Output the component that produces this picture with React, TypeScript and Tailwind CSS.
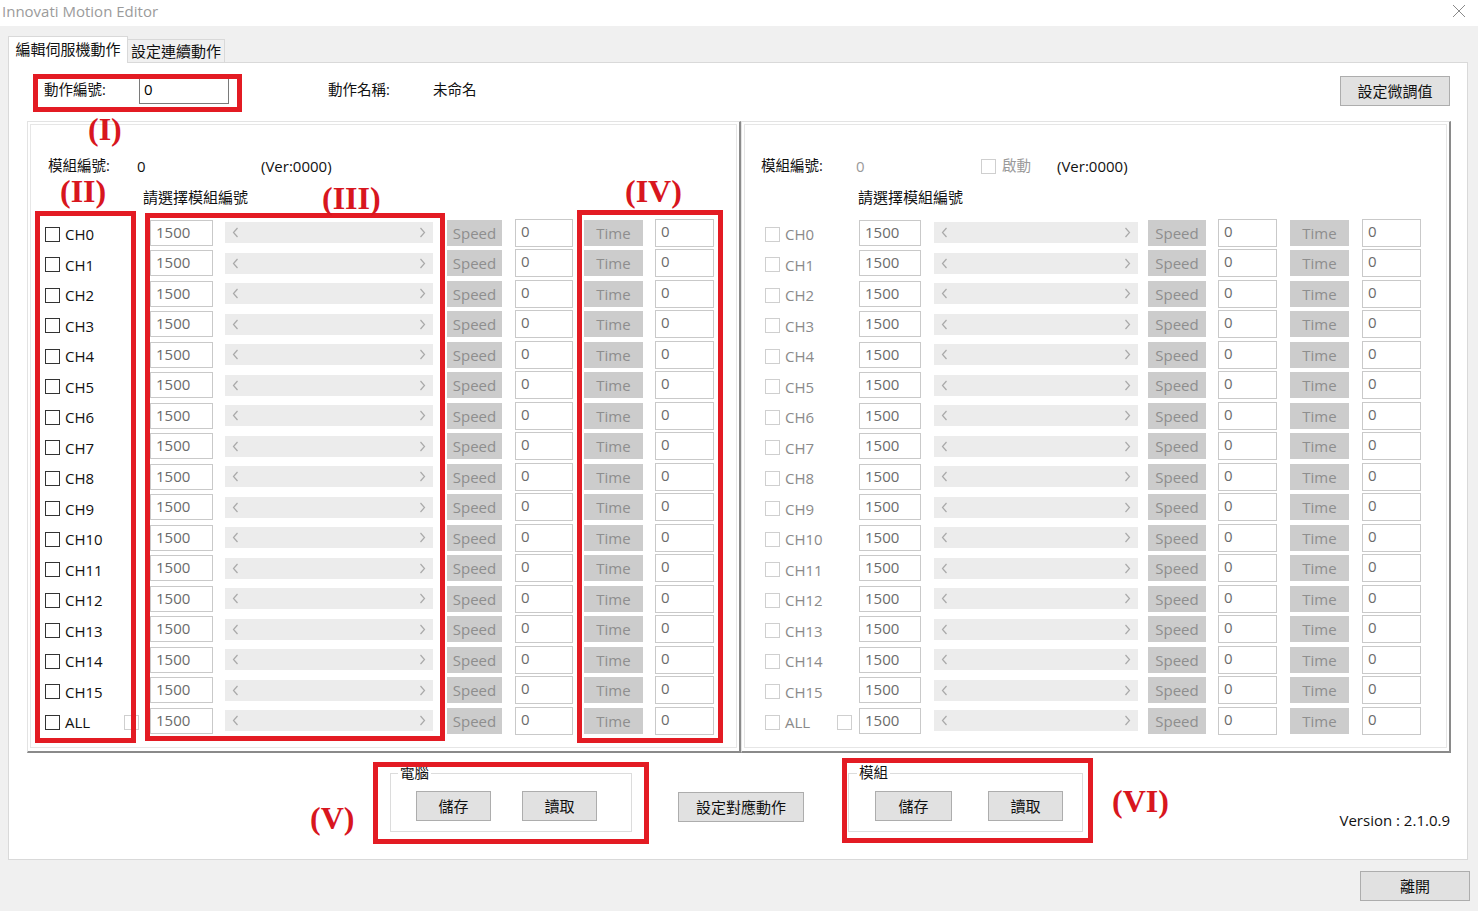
import React from "react";

const FONT = '"Open Sans", "Noto Sans CJK TC", sans-serif';

function Chevron({ dir }: { dir: "l" | "r" }) {
  return (
    <svg width="7" height="11" viewBox="0 0 7 11" className="block">
      {dir === "l" ? (
        <path d="M5.5 1 L1.5 5.5 L5.5 10" fill="none" stroke="#a9a9a9" strokeWidth="1.2" />
      ) : (
        <path d="M1.5 1 L5.5 5.5 L1.5 10" fill="none" stroke="#a9a9a9" strokeWidth="1.2" />
      )}
    </svg>
  );
}

function Check({ active }: { active: boolean }) {
  return (
    <div
      className={
        active
          ? "w-[15px] h-[15px] border border-[#333333] bg-white shrink-0"
          : "w-[15px] h-[15px] border border-[#cfcfcf] bg-white shrink-0"
      }
    />
  );
}

type RowCls = {
  active: boolean;
  lead: string;
  label: string;
  inW: string;
  g1: string;
  g2: string;
  g3: string;
  g4: string;
  g5: string;
};

const LEFT: RowCls = {
  active: true,
  lead: "w-[105px] flex items-center shrink-0",
  label: "ml-[5px] w-[59px] text-[15px] text-[#111111]",
  inW: "w-[63px]",
  g1: "ml-[12px] w-[208px]",
  g2: "ml-[14px] w-[55px]",
  g3: "ml-[13px] w-[58px]",
  g4: "ml-[11px] w-[59px]",
  g5: "ml-[12px] w-[59px]",
};

const RIGHT: RowCls = {
  active: false,
  lead: "w-[94px] flex items-center shrink-0",
  label: "ml-[5px] w-[52px] text-[15px] text-[#8a8a8a]",
  inW: "w-[62px]",
  g1: "ml-[13px] w-[204px]",
  g2: "ml-[10px] w-[58px]",
  g3: "ml-[12px] w-[59px]",
  g4: "ml-[13px] w-[59px]",
  g5: "ml-[13px] w-[59px]",
};

function Row({ name, c }: { name: string; c: RowCls }) {
  return (
    <div className="h-[30.5px] flex items-center">
      <div className={c.lead}>
        <Check active={c.active} />
        <span className={c.label}>{name}</span>
        {name === "ALL" && <Check active={false} />}
      </div>
      <div
        className={
          c.inW +
          " mb-[3px] h-[26px] shrink-0 border border-[#c9c9c9] bg-white pl-[5px] text-[15px] leading-[22px] text-[#6b6b6b]"
        }
      >
        1500
      </div>
      <div
        className={
          c.g1 +
          " mb-[3px] h-[21px] shrink-0 bg-[#ececec] flex items-center justify-between px-[7px]"
        }
      >
        <Chevron dir="l" />
        <Chevron dir="r" />
      </div>
      <div
        className={
          c.g2 +
          " mb-[3px] h-[26px] shrink-0 bg-[#cccccc] flex items-center justify-center text-[15px] text-[#8e8e8e]"
        }
      >
        Speed
      </div>
      <div
        className={
          c.g3 +
          " mb-[3px] h-[28px] shrink-0 border border-[#c9c9c9] bg-white pl-[5px] text-[15px] leading-[22px] text-[#6b6b6b]"
        }
      >
        0
      </div>
      <div
        className={
          c.g4 +
          " mb-[3px] h-[26px] shrink-0 bg-[#cccccc] flex items-center justify-center text-[15px] text-[#8e8e8e]"
        }
      >
        Time
      </div>
      <div
        className={
          c.g5 +
          " mb-[3px] h-[28px] shrink-0 border border-[#c9c9c9] bg-white pl-[5px] text-[15px] leading-[22px] text-[#6b6b6b]"
        }
      >
        0
      </div>
    </div>
  );
}

const NAMES = [
  "CH0", "CH1", "CH2", "CH3", "CH4", "CH5", "CH6", "CH7", "CH8", "CH9",
  "CH10", "CH11", "CH12", "CH13", "CH14", "CH15", "ALL",
];

function Btn({ className, children }: { className: string; children: React.ReactNode }) {
  return (
    <div
      className={
        className +
        " h-[30px] shrink-0 bg-[#e1e1e1] border border-[#adadad] flex items-center justify-center text-[15px] text-[#111111]"
      }
    >
      {children}
    </div>
  );
}

function Red({ className }: { className: string }) {
  return <div className={"absolute border-[5px] border-[#e31b23] " + className} />;
}

function RedLabel({ className, children }: { className: string; children: React.ReactNode }) {
  return (
    <div
      className={
        "absolute text-[32px] leading-[32px] font-bold text-[#d8161e] " + className
      }
      style={{ fontFamily: '"Liberation Serif", serif' }}
    >
      {children}
    </div>
  );
}

export default function App() {
  return (
    <div
      className="relative w-[1478px] h-[911px] bg-[#f0f0f0] flex flex-col overflow-hidden"
      style={{ fontFamily: FONT }}
    >
      {/* title bar */}
      <div className="h-[26px] bg-white flex items-center justify-between shrink-0">
        <span className="pl-[2px] text-[15px] leading-[20px] text-[#9b9b9b] -mt-[5px]">Innovati Motion Editor</span>
        <svg width="14" height="14" viewBox="0 0 14 14" className="mr-[12px] -mt-[4px]">
          <path d="M1 1 L13 13 M13 1 L1 13" stroke="#8a8a8a" strokeWidth="1" />
        </svg>
      </div>

      {/* tabs */}
      <div className="pt-[10px] pl-[8px] flex items-end shrink-0">
        <div className="w-[120px] h-[27px] bg-white border border-[#d9d9d9] border-b-0 -mb-px relative z-10 flex items-center justify-center text-[15px] text-[#111111] pb-[2px]">
          編輯伺服機動作
        </div>
        <div className="w-[97px] h-[23px] bg-[#f0f0f0] border border-[#d9d9d9] border-l-0 border-b-0 flex items-center justify-center text-[15px] text-[#111111]">
          設定連續動作
        </div>
      </div>

      {/* tab panel */}
      <div className="ml-[8px] w-[1460px] h-[798px] bg-white border border-[#d9d9d9] shrink-0 flex flex-col">
        {/* top row */}
        <div className="mt-[13px] h-[30px] flex items-center">
          <span className="ml-[35px] w-[95px] text-[14.5px] text-[#111111] -mt-[2px]">動作編號:</span>
          <div className="w-[90px] h-[26px] border border-[#7a7a7a] pl-[4px] text-[15px] leading-[20px] text-black">
            0
          </div>
          <span className="ml-[99px] w-[105px] text-[14.5px] text-[#111111] -mt-[2px]">動作名稱:</span>
          <span className="text-[14.5px] text-[#111111] -mt-[2px]">未命名</span>
          <div className="flex-1" />
          <Btn className="w-[110px] mr-[17px]">設定微調值</Btn>
        </div>

        {/* group boxes */}
        <div className="mt-[15px] ml-[18px] flex">
          {/* left */}
          <div className="w-[714px] h-[632px] border-t border-l border-[#e3e3e3] border-r-2 border-b-2 border-r-[#8a8a8a] border-b-[#8a8a8a]">
            <div className="m-[2px] h-[624px] border border-[#e6e6e6] flex flex-col">
              <div className="mt-[31px] h-[20px] flex items-center pl-[17px] text-[14.5px] text-[#111111]">
                <span className="w-[89px]">模組編號:</span>
                <span className="w-[124px] text-[15px]">0</span>
                <span className="text-[15px]">(Ver:0000)</span>
              </div>
              <div className="mt-[11px] h-[20px] flex items-center pl-[112px] text-[15px] text-[#111111]">
                請選擇模組編號
              </div>
              <div className="mt-[12px] pl-[14px] flex flex-col">
                {NAMES.map((n) => (
                  <Row key={n} name={n} c={LEFT} />
                ))}
              </div>
            </div>
          </div>
          {/* right */}
          <div className="w-[710px] h-[632px] border-t border-l border-[#e3e3e3] border-r-2 border-b-2 border-r-[#8a8a8a] border-b-[#8a8a8a]">
            <div className="m-[2px] h-[624px] border border-[#e6e6e6] flex flex-col">
              <div className="mt-[31px] h-[20px] flex items-center pl-[16px] text-[14.5px] text-[#111111]">
                <span className="w-[95px]">模組編號:</span>
                <span className="w-[125px] text-[15px] text-[#9a9a9a]">0</span>
                <Check active={false} />
                <span className="ml-[6px] w-[55px] text-[#9a9a9a]">啟動</span>
                <span className="text-[15px]">(Ver:0000)</span>
              </div>
              <div className="mt-[11px] h-[20px] flex items-center pl-[113px] text-[15px] text-[#111111]">
                請選擇模組編號
              </div>
              <div className="mt-[12px] pl-[20px] flex flex-col">
                {NAMES.map((n) => (
                  <Row key={n} name={n} c={RIGHT} />
                ))}
              </div>
            </div>
          </div>
        </div>

        {/* bottom */}
        <div className="flex items-start flex-1">
          <fieldset className="ml-[381px] mt-[12px] w-[242px] h-[67px] border border-[#dcdcdc] pl-[25px] pr-0 pt-0">
            <legend className="-ml-[18px] px-[2px] text-[14.5px] leading-[16px] text-[#111111]">電腦</legend>
            <div className="mt-[10px] flex">
              <Btn className="w-[75px]">儲存</Btn>
              <Btn className="ml-[31px] w-[75px]">讀取</Btn>
            </div>
          </fieldset>
          <Btn className="ml-[46px] mt-[39px] w-[126px]">設定對應動作</Btn>
          <fieldset className="ml-[44px] mt-[12px] w-[235px] h-[67px] border border-[#dcdcdc] pl-[26px] pr-0 pt-0">
            <legend className="-ml-[18px] px-[2px] text-[14.5px] leading-[16px] text-[#111111]">模組</legend>
            <div className="mt-[10px] flex">
              <Btn className="w-[77px]">儲存</Btn>
              <Btn className="ml-[36px] w-[75px]">讀取</Btn>
            </div>
          </fieldset>
          <div className="flex-1" />
          <span className="mt-[57px] mr-[17px] text-[15px] leading-[20px] text-[#111111]">
            Version : 2.1.0.9
          </span>
        </div>
      </div>

      {/* exit */}
      <div className="flex justify-end pr-[8px] mt-[11px]">
        <Btn className="w-[110px]">離開</Btn>
      </div>

      {/* annotations */}
      <div className="absolute inset-0 pointer-events-none">
        <Red className="left-[33px] top-[74px] w-[209px] h-[38px]" />
        <Red className="left-[35px] top-[211px] w-[101px] h-[532px]" />
        <Red className="left-[145px] top-[213px] w-[300px] h-[528px]" />
        <Red className="left-[577px] top-[210px] w-[146px] h-[533px]" />
        <Red className="left-[373px] top-[762px] w-[276px] h-[82px]" />
        <Red className="left-[842px] top-[758px] w-[251px] h-[85px]" />
        <RedLabel className="left-[88px] top-[113px]">(I)</RedLabel>
        <RedLabel className="left-[60px] top-[175px]">(II)</RedLabel>
        <RedLabel className="left-[322px] top-[182px]">(III)</RedLabel>
        <RedLabel className="left-[625px] top-[175px]">(IV)</RedLabel>
        <RedLabel className="left-[310px] top-[802px]">(V)</RedLabel>
        <RedLabel className="left-[1112px] top-[785px]">(VI)</RedLabel>
      </div>
    </div>
  );
}
